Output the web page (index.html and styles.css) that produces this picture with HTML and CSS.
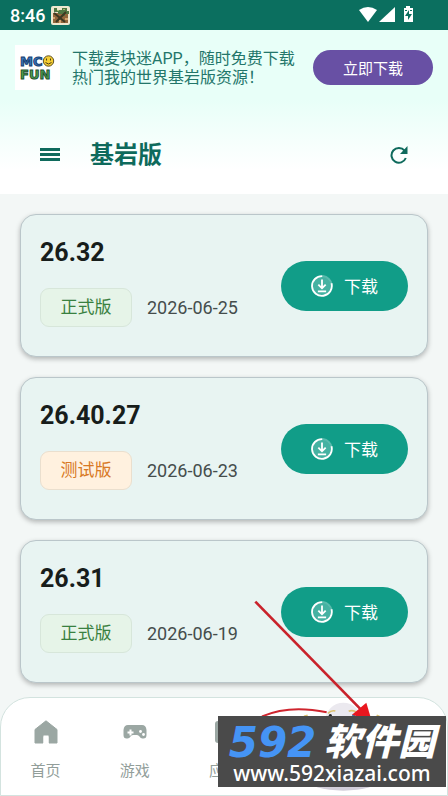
FILE: index.html
```
<!DOCTYPE html>
<html lang="zh-CN">
<head>
<meta charset="utf-8">
<meta name="viewport" content="width=device-width, initial-scale=1">
<title>基岩版</title>
<link rel="stylesheet" href="styles.css">
</head>
<body>
<svg class="defs" width="0" height="0" aria-hidden="true">
  <symbol id="download" viewBox="0 0 24 24">
    <circle cx="12" cy="12" r="10" fill="#fff" fill-opacity=".22"/>
    <path d="M13 1.1A11 11 0 0 1 22.7 10.500" fill="none" stroke="#fff" stroke-opacity=".3" stroke-width="2"/>
    <path d="M12.500 1.200A10.800 10.800 0 1 0 22.300 9" fill="none" stroke="#fff" stroke-width="2"/>
    <path d="M12 5v9M8 10.500l4 4 4-4M7.500 17.800h9" fill="none" stroke="#fff" stroke-width="2"/>
  </symbol>
</svg>
<div class="status">
  <span class="time">8:46</span>
  <svg class="app-mark" viewBox="0 0 19 19" aria-hidden="true">
    <rect width="19" height="19" rx="2" fill="#eee8cf"/>
    <path d="M2 7h15v10H2z" fill="#92663b"/>
    <path d="M3 2h3v2h5V2h5v3h2v3h-4v2h-3V8H7V6H3z" fill="#507743"/>
    <path d="M3 7l11 9M15 6L5 16" stroke="#3d3821" stroke-width="2"/>
    <path d="M2 11h2v2H2zM14 12h3v2h-3zM8 14h2v3H8z" fill="#d0a26c"/>
    <path d="M6 4h2v1H6zM12 3h2v1h-2z" fill="#a8bd72"/>
  </svg>
  <svg class="signals" viewBox="0 0 56 18" aria-hidden="true" fill="#fff">
    <path d="M1 4Q10-2 19 4L10 16z"/>
    <path d="M37 1v15H21z"/>
    <path fill-rule="evenodd" d="M48 0h4v2h3v14h-9V2h2zM51 4l-4 6h3v4l4-6h-3zM47 4v1h2V4zM52 4v1h2V4z"/>
  </svg>
</div>
<header class="top">
  <div class="banner">
    <svg class="logo" viewBox="0 0 45 45" role="img" aria-label="MC FUN">
      <rect width="45" height="45" fill="#fff"/>
      <g class="logo-text">
        <text x="5" y="21" fill="#3978bd" stroke="#173d70">MC</text>
        <text x="5" y="34" fill="#51a34a" stroke="#1e5235">FUN</text>
      </g>
      <circle cx="33.500" cy="16" r="5.200" fill="#f4cd32" stroke="#605126"/>
      <path d="M31.500 13.500v2M35.500 13.500v2M30.500 17.500q3 3 6 0" fill="none" stroke="#4d3d17"/>
    </svg>
    <p class="promo">下载麦块迷APP，随时免费下载热门我的世界基岩版资源！</p>
    <button class="get-app" type="button">立即下载</button>
  </div>
  <div class="toolbar">
    <button class="icon-button" type="button" aria-label="菜单">
      <svg width="20" height="14" viewBox="0 0 20 14" fill="#0e6a5c"><path d="M0 0h20v3H0zM0 5h20v3H0zM0 10h20v3H0z"/></svg>
    </button>
    <h1>基岩版</h1>
    <button class="icon-button" type="button" aria-label="刷新">
      <svg width="18" height="18" viewBox="0 0 18 18"><path d="M14.600 4.600A7.400 7.400 0 1 0 15.800 12" fill="none" stroke="#0e6a5c" stroke-width="2"/><path d="M17.500 0v8H10z" fill="#0e6a5c"/></svg>
    </button>
  </div>
</header>
<main>
  <article class="card">
    <div class="info"><h2>26.32</h2><div class="meta"><span class="tag">正式版</span><time>2026-06-25</time></div></div>
    <button class="download" type="button"><svg><use href="#download"/></svg>下载</button>
  </article>
  <article class="card">
    <div class="info"><h2>26.40.27</h2><div class="meta"><span class="tag beta">测试版</span><time>2026-06-23</time></div></div>
    <button class="download" type="button"><svg><use href="#download"/></svg>下载</button>
  </article>
  <article class="card">
    <div class="info"><h2>26.31</h2><div class="meta"><span class="tag">正式版</span><time>2026-06-19</time></div></div>
    <button class="download" type="button"><svg><use href="#download"/></svg>下载</button>
  </article>
</main>
<footer>
  <nav>
    <a href="#"><svg viewBox="0 0 24 24" fill="#9ba7a3"><path d="M12 .8 1 9.500V23h8v-7h6v7h8V9.500z" stroke="#9ba7a3" stroke-linejoin="round"/><path d="M9.500 15.500h5V24h-5z" fill="#fff"/></svg>首页</a>
    <a href="#"><svg viewBox="0 0 24 24"><path d="M5 5h14q4 0 4.500 5v5q0 4-4 3.500-2 0-3-2-1-1.500-2.500-1.500h-4Q8.500 15 7.500 16.500q-1 2-3 2-4 .5-4-3.500v-5Q1 5 5 5z" fill="#9ba7a3"/><path d="M7.500 9.500v6M4.500 12.500h6" stroke="#fff" stroke-width="2"/><circle cx="17.500" cy="11.500" r="1.400" fill="#fff"/><circle cx="20.500" cy="14.500" r="1.400" fill="#fff"/></svg>游戏</a>
    <a href="#"><svg viewBox="0 0 24 24"><rect x="3" y="1" width="20" height="22" rx="3" fill="#9ba7a3"/></svg>应用</a>
  </nav>
  <svg class="pointer" viewBox="0 0 744 618" aria-hidden="true">
    <ellipse cx="430" cy="570" rx="108" ry="32" fill="#d2ced9"/>
    <circle cx="430" cy="392" r="54" fill="#ebe9ef"/>
    <path d="M384 370q10-10 22-7M446 364q10-5 22 2M312 379l11-3M530 376l10 4" fill="none" stroke="#dec16c" stroke-width="5"/>
    <circle cx="391" cy="377" r="5" fill="#222"/><circle cx="461" cy="377" r="5" fill="#327dad"/>
    <path d="M186 379Q270 343 380 367" fill="none" stroke="#cf252e" stroke-width="6"/>
    <path d="M166 35 486 362" stroke="#c9222b" stroke-width="8"/>
    <path d="M499 338 515 392 456 374z" fill="#e9171f"/>
  </svg>
  <div class="watermark">
    <div class="brand"><span>592</span><b>软件园</b></div>
    <div class="site">www.592xiazai.com</div>
  </div>
</footer>
</body>
</html>
```

FILE: styles.css
```
* { box-sizing: border-box; }

body {
  margin: 0;
  min-height: 100vh;
  display: flex;
  flex-direction: column;
  background: #f3f7f6;
  color: #171d1b;
  font-family: Roboto, "Noto Sans CJK SC", sans-serif;
}

h1, h2, p { margin: 0; }
button { border: 0; padding: 0; font: inherit; }
.defs { position: absolute; }

.status {
  height: 30px;
  padding: 0 34px 0 10px;
  display: flex;
  align-items: center;
  gap: 6px;
  background: #0b6f5f;
  color: #fff;
}
.time { font-size: 18px; font-weight: 500; }
.app-mark { width: 19px; height: 19px; }
.signals { width: 56px; height: 18px; margin-left: auto; }

.top { background: linear-gradient(#e8fff8 0, #e8fff8 70px, #fff 140px); }
.banner {
  height: 75px;
  padding: 0 15px;
  display: flex;
  align-items: center;
  gap: 12px;
}
.logo { width: 45px; height: 45px; flex: none; }
.logo-text {
  font: bold 13px "DejaVu Sans", sans-serif;
  stroke-width: 1px;
}
.promo { flex: 1; font-size: 16px; line-height: 19px; color: #23766a; }
.get-app {
  width: 120px;
  height: 35px;
  border-radius: 18px;
  background: #6850a4;
  color: #fff;
  font-size: 15px;
}
.toolbar {
  height: 89px;
  padding: 10px 40px 0;
  display: flex;
  align-items: center;
}
.icon-button { display: flex; background: none; }
.toolbar h1 { flex: 1; padding-left: 30px; font-size: 24px; line-height: 32px; color: #0e6a5c; }

main {
  padding: 20px 20px 14px;
  display: flex;
  flex-direction: column;
  gap: 20px;
}
.card {
  height: 143px;
  padding: 0 19px;
  display: flex;
  align-items: center;
  justify-content: space-between;
  border: 1px solid #bac6ca;
  border-radius: 16px;
  background: #e8f4f2;
  box-shadow: 0 2px 5px #0004;
}
.info { padding-bottom: 6px; display: flex; flex-direction: column; gap: 20px; }
.card h2 { font-size: 25px; line-height: 30px; }
.meta { display: flex; align-items: center; gap: 15px; }
.tag {
  width: 92px;
  height: 39px;
  border: 1px solid #d7e6da;
  border-radius: 9px;
  background: #e6f4e8;
  color: #398040;
  font-size: 17px;
  line-height: 36px;
  text-align: center;
}
.beta { border-color: #eadfce; background: #fff1df; color: #d87925; }
time { font-size: 18px; color: #454d4c; }
.download {
  width: 127px;
  height: 50px;
  display: flex;
  align-items: center;
  justify-content: center;
  gap: 11px;
  border-radius: 25px;
  background: #119d88;
  color: #fff;
  font-size: 17px;
}
.download svg { width: 22px; height: 22px; }

footer { position: relative; margin-top: auto; }
nav {
  height: 99px;
  padding-top: 22px;
  display: flex;
  border: 1px solid #d3e3df;
  border-radius: 30px 30px 0 0;
  background: #fff;
}
nav a {
  width: 20%;
  display: flex;
  flex-direction: column;
  align-items: center;
  gap: 16px;
  color: #929e9a;
  font-size: 15px;
  line-height: 22px;
  text-decoration: none;
}
nav svg { width: 24px; height: 24px; }

.pointer {
  position: absolute;
  right: 0;
  bottom: 0;
  width: 248px;
  height: 206px;
  pointer-events: none;
}
.watermark {
  position: absolute;
  right: 2px;
  bottom: 9px;
  width: 228px;
  height: 71px;
  padding-top: 8px;
  background: #4a4a4a;
  color: #fff;
}
.brand {
  display: flex;
  align-items: center;
  justify-content: center;
  gap: 8px;
  height: 38px;
  line-height: 38px;
  font-style: italic;
}
.brand span { color: #4594f5; font: italic bold 42px/38px "DejaVu Sans", sans-serif; }
.brand b { font-size: 37px; font-weight: 900; }
.site { font: 500 21px/22px "Noto Sans", sans-serif; text-align: center; }
```
